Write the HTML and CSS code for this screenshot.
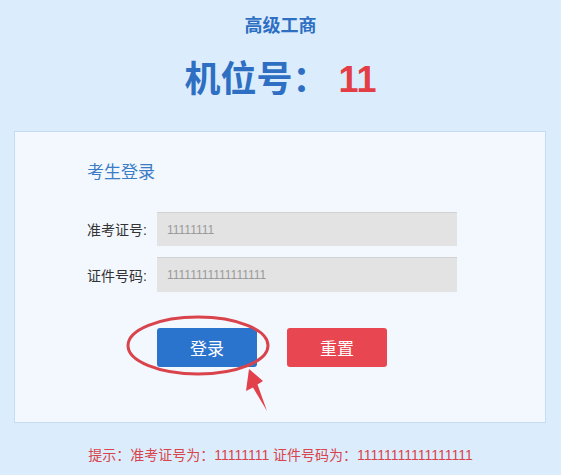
FILE: index.html
```html
<!DOCTYPE html>
<html lang="zh-CN">
<head>
<meta charset="utf-8">
<title>考生登录</title>
<link rel="stylesheet" href="styles.css">
</head>
<body>
<div class="header">
  <div class="org">高级工商</div>
  <div class="seat">机位号：<span class="seat-no">11</span></div>
</div>
<div class="panel">
  <div class="panel-title">考生登录</div>
  <div class="form-row">
    <label class="form-label">准考证号:</label>
    <input class="form-input" type="text" value="11111111" readonly>
  </div>
  <div class="form-row form-row-2">
    <label class="form-label">证件号码:</label>
    <input class="form-input" type="text" value="11111111111111111" readonly>
  </div>
  <div class="btn-row">
    <button class="btn btn-login">登录</button>
    <button class="btn btn-reset">重置</button>
    <svg class="mark" width="155" height="105" viewBox="120 310 155 105" xmlns="http://www.w3.org/2000/svg">
      <ellipse cx="198" cy="345.5" rx="70" ry="28.5" fill="none" stroke="#d9434b" stroke-width="3"/>
      <polygon points="249,369 263,381 257.5,384.5 267,411 253,387.5 246,391" fill="#e2404a"/>
    </svg>
  </div>
</div>
<div class="hint">提示：准考证号为：11111111 证件号码为：11111111111111111</div>
</body>
</html>
```

FILE: styles.css
```css
* { box-sizing: border-box; }
body {
  margin: 0;
  background: #dbedfd;
  font-family: "Liberation Sans", "Noto Sans CJK SC", sans-serif;
  color: #333;
}
.header {
  text-align: center;
  padding-top: 14px;
}
.org {
  font-size: 18px;
  font-weight: bold;
  line-height: 24px;
  color: #2f6fc3;
}
.seat {
  margin-top: 20px;
  font-size: 36px;
  font-weight: bold;
  line-height: 44px;
  color: #2f6fc3;
}
.seat-no {
  color: #e33d46;
  margin-left: 10px;
}
.panel {
  margin: 29px 15px 0 14px;
  height: 292px;
  background: #f3f8fe;
  border: 1px solid #c6dcf1;
  padding: 29px 0 0 72px;
}
.panel-title {
  font-size: 17px;
  line-height: 24px;
  color: #3b7cc7;
}
.form-row {
  display: flex;
  align-items: center;
  margin-top: 27px;
}
.form-row-2 { margin-top: 11px; }
.form-label {
  width: 70px;
  font-size: 14px;
  color: #333;
}
.form-input {
  width: 300px;
  height: 34px;
  border: none;
  border-top: 1px solid #d2d2d2;
  background: #e3e3e3;
  padding: 0 10px;
  font-family: "Liberation Sans", sans-serif;
  font-size: 12px;
  color: #9a9a9a;
  outline: none;
}
.form-row-2 .form-input { height: 35px; }
.btn-row {
  position: relative;
  display: flex;
  gap: 30px;
  padding-left: 70px;
  margin-top: 36px;
}
.btn {
  width: 100px;
  height: 39px;
  border: none;
  border-radius: 3px;
  color: #fff;
  font-family: "Noto Sans CJK SC", sans-serif;
  font-size: 17px;
  padding: 0;
}
.btn-login { background: #2b74cd; }
.btn-reset { background: #e84751; }
.mark {
  position: absolute;
  left: 33px;
  top: -18px;
}
.hint {
  text-align: center;
  margin-top: 22px;
  font-size: 14px;
  line-height: 20px;
  color: #d9434b;
}
```
